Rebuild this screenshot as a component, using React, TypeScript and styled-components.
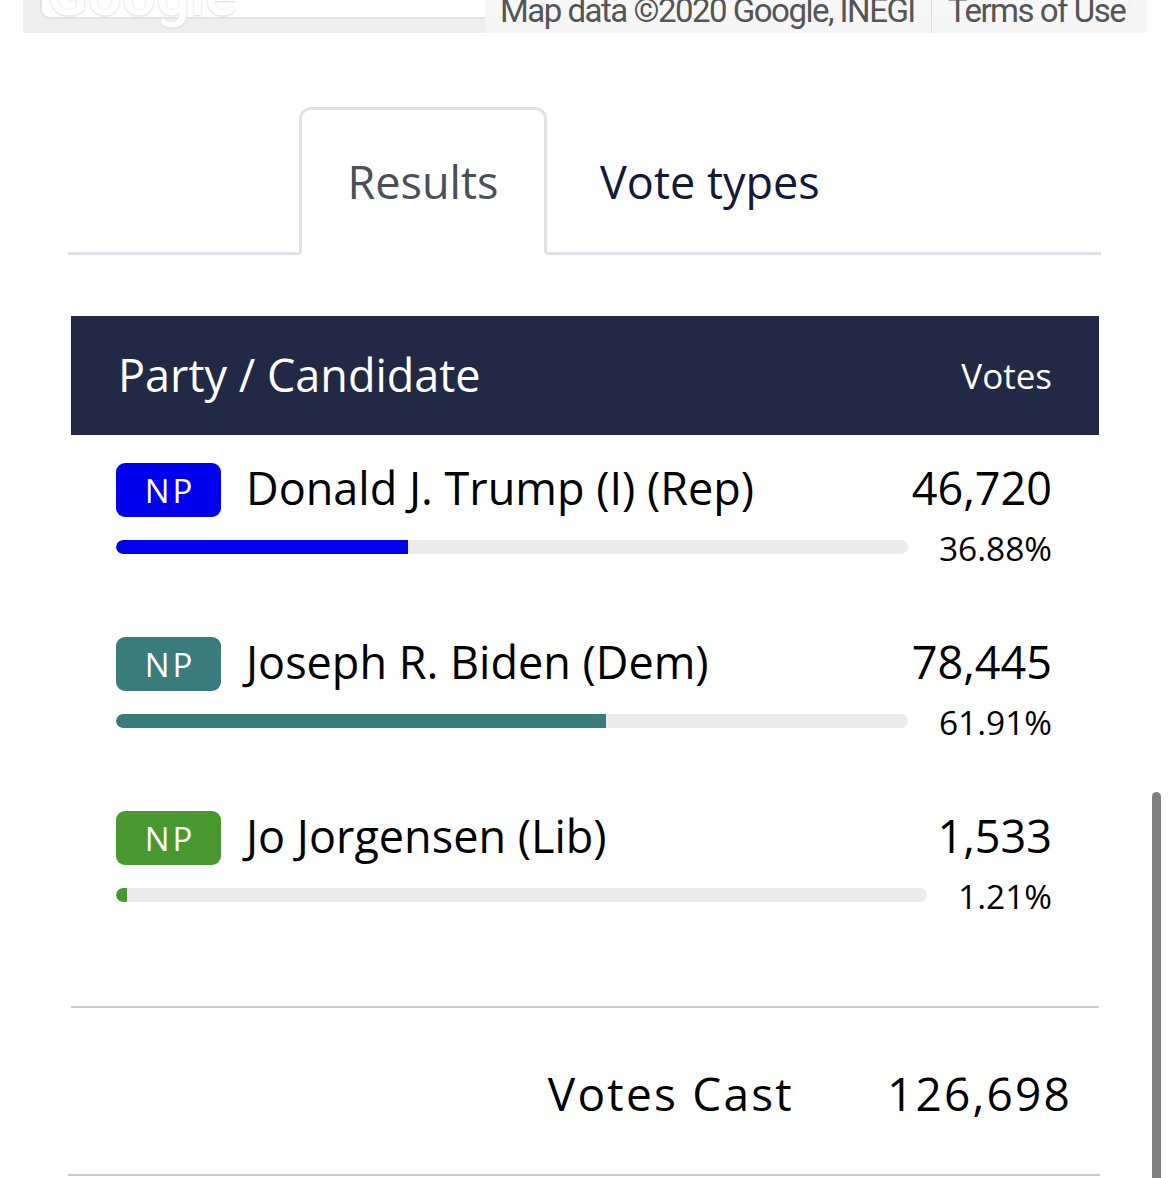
import styled, { createGlobalStyle } from 'styled-components';

const GlobalStyle = createGlobalStyle`
  html, body {
    margin: 0;
    padding: 0;
    background: #ffffff;
  }
  body {
    font-family: 'Open Sans', 'Noto Sans', sans-serif;
    color: #000000;
  }
`;

const Page = styled.div`
  position: relative;
  width: 1170px;
  height: 1178px;
  overflow: hidden;
  background: #ffffff;
`;

/* map strip at the very top (the bottom edge of an embedded map) */
const MapStrip = styled.div`
  position: relative;
  height: 33px;
  margin: 0 23px;
  background: #eeeeee;
  overflow: hidden;
`;

const MapControl = styled.div`
  position: absolute;
  left: 17px;
  right: 17px;
  top: -30px;
  height: 45px;
  background: #ffffff;
  border: 2px solid #e2e2e2;
  border-radius: 10px;
`;

const GoogleMark = styled.span`
  position: absolute;
  left: 24px;
  bottom: 8px;
  font-family: 'Roboto', 'Liberation Sans', sans-serif;
  font-size: 60px;
  font-weight: 500;
  line-height: 1;
  color: #ffffff;
  text-shadow: 0 0 2px #e0e0e0, 0 1px 2px #d8d8d8;
`;

const Attribution = styled.div`
  position: absolute;
  left: 462px;
  right: 0;
  top: 0;
  bottom: 0;
  display: flex;
  align-items: flex-end;
  gap: 16px;
  padding: 0 0 6px 15px;
  box-sizing: border-box;
  background: rgba(246, 246, 246, 0.85);
  font-family: 'Roboto', 'Liberation Sans', sans-serif;
  font-size: 33px;
  line-height: 1;
  letter-spacing: -1.5px;
  color: #555555;
  white-space: nowrap;
`;

const AttrSep = styled.span`
  width: 1px;
  align-self: stretch;
  background: #dddddd;
  margin-bottom: -6px;
`;

/* tabs */
const TabBar = styled.div`
  display: flex;
  margin: 74px 69px 0 68px;
  padding-left: 231px;
  border-bottom: 3px solid #dee2e6;
`;

const Tab = styled.div<{ $active?: boolean }>`
  height: 148px;
  box-sizing: border-box;
  display: flex;
  align-items: center;
  justify-content: center;
  padding: 0 50px 0;
  margin-bottom: ${(p) => (p.$active ? '-3px' : '0')};
  font-size: 45px;
  color: ${(p) => (p.$active ? '#495057' : '#14193a')};
  border: 3px solid ${(p) => (p.$active ? '#dee2e6' : 'transparent')};
  border-bottom: ${(p) => (p.$active ? '3px solid #ffffff' : '0')};
  border-radius: 12px 12px 0 0;
  background: ${(p) => (p.$active ? '#ffffff' : 'transparent')};
  ${(p) => (p.$active ? 'width: 248px;' : 'height: 145px;')}
`;

/* results table */
const Table = styled.div`
  margin: 61px 71px 0;
`;

const HeaderBand = styled.div`
  height: 119px;
  display: flex;
  align-items: center;
  justify-content: space-between;
  padding: 0 47px;
  background: #222945;
  color: #ffffff;
`;

const HeaderTitle = styled.span`
  font-size: 45px;
  padding-bottom: 2px;
`;

const HeaderVotes = styled.span`
  font-size: 35px;
`;

const Rows = styled.div`
  padding-bottom: 49px;
  border-bottom: 2px solid #cccccc;
`;

const Row = styled.div`
  height: 174px;
  box-sizing: border-box;
  padding: 28px 47px 0 45px;
  display: grid;
  grid-template-rows: 54px 14px;
  row-gap: 23px;
`;

const TopLine = styled.div`
  display: flex;
  align-items: center;
`;

const Badge = styled.span<{ $color: string }>`
  width: 105px;
  height: 54px;
  flex: none;
  display: flex;
  align-items: center;
  justify-content: center;
  border-radius: 9px;
  background: ${(p) => p.$color};
  color: #ffffff;
  font-size: 33px;
  letter-spacing: 3px;
  padding-left: 3px;
  box-sizing: border-box;
`;

const Name = styled.span`
  flex: 1;
  margin-left: 25px;
  font-size: 45px;
  line-height: 54px;
  padding-bottom: 4px;
  white-space: nowrap;
`;

const VoteCount = styled.span`
  font-size: 45px;
  line-height: 54px;
  padding-bottom: 4px;
`;

const BarLine = styled.div`
  display: flex;
  align-items: center;
  gap: 31px;
`;

const BarTrack = styled.div`
  flex: 1;
  height: 14px;
  border-radius: 7px;
  background: #ebebeb;
  overflow: hidden;
`;

const BarFill = styled.div<{ $color: string }>`
  height: 100%;
  background: ${(p) => p.$color};
  border-radius: 7px 0 0 7px;
`;

const Percent = styled.span`
  font-size: 33.5px;
  line-height: 14px;
  padding-top: 1px;
`;

const Totals = styled.div`
  height: 168px;
  display: flex;
  align-items: center;
  justify-content: flex-end;
  gap: 93px;
  padding: 4px 28px 0 0;
  box-sizing: border-box;
  border-bottom: 2px solid #cccccc;
  margin: 0 -1px 0 -3px;
  font-size: 46px;
  font-weight: 500;
  letter-spacing: 2.2px;
`;

const Scrollbar = styled.div`
  position: absolute;
  left: 1152px;
  top: 792px;
  width: 9px;
  height: 400px;
  border-radius: 5px;
  background: #808080;
`;

type Candidate = {
  name: string;
  votes: string;
  pct: number;
  color: string;
};

const candidates: Candidate[] = [
  { name: 'Donald J. Trump (I) (Rep)', votes: '46,720', pct: 36.88, color: '#0000ee' },
  { name: 'Joseph R. Biden (Dem)', votes: '78,445', pct: 61.91, color: '#3a7b7b' },
  { name: 'Jo Jorgensen (Lib)', votes: '1,533', pct: 1.21, color: '#47992f' },
];

const App = () => {
  return (
    <Page>
      <GlobalStyle />
      <MapStrip>
        <MapControl />
        <GoogleMark>Google</GoogleMark>
        <Attribution>
          <span>Map data ©2020 Google, INEGI</span>
          <AttrSep />
          <span>Terms of Use</span>
        </Attribution>
      </MapStrip>

      <TabBar>
        <Tab $active>Results</Tab>
        <Tab>Vote types</Tab>
      </TabBar>

      <Table>
        <HeaderBand>
          <HeaderTitle>Party / Candidate</HeaderTitle>
          <HeaderVotes>Votes</HeaderVotes>
        </HeaderBand>

        <Rows>
          {candidates.map((c) => (
            <Row key={c.name}>
              <TopLine>
                <Badge $color={c.color}>NP</Badge>
                <Name>{c.name}</Name>
                <VoteCount>{c.votes}</VoteCount>
              </TopLine>
              <BarLine>
                <BarTrack>
                  <BarFill $color={c.color} style={{ width: `${Math.max(c.pct, 1.3)}%` }} />
                </BarTrack>
                <Percent>{c.pct.toFixed(2)}%</Percent>
              </BarLine>
            </Row>
          ))}
        </Rows>

        <Totals>
          <span>Votes Cast</span>
          <span>126,698</span>
        </Totals>
      </Table>

      <Scrollbar />
    </Page>
  );
};

export default App;
